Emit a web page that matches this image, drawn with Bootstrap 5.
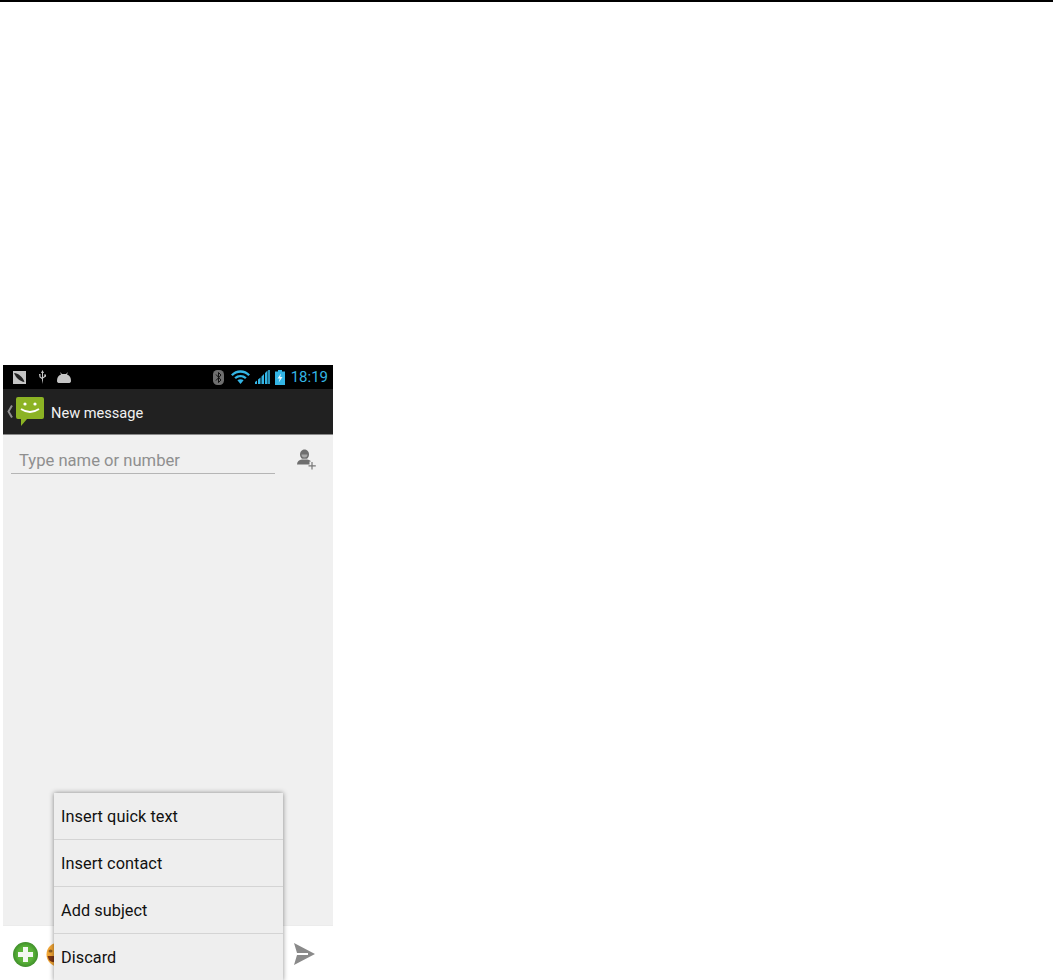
<!DOCTYPE html>
<html lang="en">
<head>
  <meta charset="UTF-8">
  <meta name="viewport" content="width=device-width, initial-scale=1.0">
  <title>New message</title>
  <link href="https://cdn.jsdelivr.net/npm/bootstrap@5.3.0/dist/css/bootstrap.min.css" rel="stylesheet">
  <style>
    html, body { height: 100%; overflow: hidden; background: #fff; }
    body { font-family: Roboto, "Liberation Sans", sans-serif; }

    .top-rule { height: 2px; background: #000; }

    .phone { width: 330px; height: 615px; margin: 363px 0 0 3px; position: relative; overflow: hidden; }

    .status-bar { height: 24px; background: #000; padding: 0 5px 0 10px; }
    .usb-icon { margin-left: 12px; }
    .droid-icon { margin-left: 10px; }
    .wifi-icon { margin-left: 7px; }
    .signal-icon { margin-left: 5px; }
    .battery-icon { margin-left: 5px; }
    .status-time { color: #33b5e5; font-size: 15px; line-height: 24px; margin-left: 6px; }

    .action-bar { height: 46px; background: #212121; border-bottom: 1px solid #8a8a8a; }
    .msg-logo { margin-left: 3px; }
    .action-title { color: #f2f2f2; font-size: 14.6px; margin-left: 7px; padding-top: 5px; }

    .compose-area { height: 490px; background: #f0f0f0; padding: 13px 17px 0 8px; }
    .name-field { width: 264px; height: 26px; border-bottom: 1px solid #b5b5b5; color: #8f8f8f; font-size: 16.6px; line-height: 26px; padding-left: 8px; }
    .add-contact { margin-top: 1px; }

    .send-row { height: 55px; background: #fff; padding: 2px 18px 0 10px; border-top: 1px solid #ececec; }
    .emoji-peek { margin-left: 8px; }

    .attach-menu { position: absolute; left: 51px; top: 428px; width: 229px; background: #eee; box-shadow: 0 0 5px rgba(0, 0, 0, .45); }
    .attach-item { height: 47px; padding: 0 7px; color: #111; font-size: 16.3px; letter-spacing: .05px; line-height: 48px; border-bottom: 1px solid #d4d4d4; }
  </style>
</head>
<body>
  <div class="top-rule"></div>

  <div class="phone">
    <!-- status bar -->
    <div class="status-bar d-flex align-items-center">
      <svg width="13" height="13" viewBox="0 0 13 13"><rect width="13" height="13" fill="#c4c4c4"/><path d="M1 2 C5 2 10 6 11.500 11 C7 10.500 3 7 1 2Z" fill="#222"/></svg>
      <svg class="usb-icon" width="9" height="14" viewBox="0 0 9 14"><path d="M4.500 0 L6 3 H5 V10 L4.500 14 L4 10 V3 H3Z M1 4 H2.500 V6.500 L4.500 8 V9.500 L1.500 7.200Z M6 4.500 H8 V6.500 L4.500 8.800 V7.500 L6.500 6Z" fill="#c8c8c8"/></svg>
      <svg class="droid-icon me-auto" width="14" height="11" viewBox="0 0 14 11"><path d="M3 0 L5 2 H9 L11 0 L10 2.600 C13 3.600 14 6 14 9 C14 10.500 13 11 11.500 11 H2.500 C1 11 0 10.500 0 9 C0 6 1 3.600 4 2.600Z" fill="#c4c4c4"/></svg>
      <svg width="11" height="15" viewBox="0 0 11 15"><rect width="11" height="15" rx="4.500" fill="#6e6e6e"/><path d="M3 4.500 L8 10 L5.500 12.500 V2.500 L8 5 L3 10.500" fill="none" stroke="#111" stroke-width="1"/></svg>
      <svg class="wifi-icon" width="19" height="14" viewBox="0 0 19 14"><path d="M0 4.500 C5 -1.200 14 -1.200 19 4.500 L17.300 6 C12.800 1.600 6.200 1.600 1.700 6Z M3.300 7.500 C6.700 4.200 12.300 4.200 15.700 7.500 L14 9 C11.700 6.800 7.300 6.800 5 9Z M6.400 10.200 C8.100 8.800 10.900 8.800 12.600 10.200 L9.500 14Z" fill="#33b5e5"/></svg>
      <svg class="signal-icon" width="15" height="14" viewBox="0 0 15 14"><path d="M0 14 V12 L2 10.500 V14Z M3 14 V9.500 L5.500 7.500 V14Z M6.500 14 V6.500 L9 4 V14Z M10 14 V3 L12.500 0.500 V14Z" fill="#33b5e5"/><path d="M13 14 V0 H15 V14Z" fill="#2a93ba"/></svg>
      <svg class="battery-icon" width="10" height="15" viewBox="0 0 10 15"><path d="M3 0 H7 V1.500 H10 V15 H0 V1.500 H3Z" fill="#33b5e5"/><path d="M6 3.500 L2.500 8.500 H4.700 L3.700 12.500 L7.500 7 H5.200Z" fill="#e8f7fd"/></svg>
      <span class="status-time">18:19</span>
    </div>

    <!-- action bar -->
    <div class="action-bar d-flex align-items-center ps-1">
      <svg width="6" height="13" viewBox="0 0 6 13"><path d="M5 0.500 L1.500 6.500 L5 12.500" fill="none" stroke="#8f8f8f" stroke-width="2"/></svg>
      <svg class="msg-logo" width="28" height="31" viewBox="0 0 28 31">
        <path d="M2 1 H26 Q28 1 28 3 V21 Q28 23 26 23 H11 L5 30 V23 H2 Q0 23 0 21 V3 Q0 1 2 1Z" fill="#8cb324"/>
        <circle cx="9" cy="8" r="1.600" fill="#fff"/><circle cx="19" cy="8" r="1.600" fill="#fff"/>
        <path d="M5 13 Q14 19 23 13" fill="none" stroke="#fff" stroke-width="1.800"/>
      </svg>
      <span class="action-title">New message</span>
    </div>

    <!-- recipient -->
    <div class="compose-area d-flex justify-content-between align-items-start">
      <div class="name-field">Type name or number</div>
      <svg class="add-contact" width="19" height="21" viewBox="0 0 19 21">
        <path d="M3 5.500 C3 2 5.500 0.500 7.500 0.500 C9.500 0.500 12 2 12 5.500 C12 7.500 11 9 10 9.800 H5 C4 9 3 7.500 3 5.500Z" fill="#6f6f6f"/>
        <path d="M4.500 5.500 H10.500 C10.500 7.500 9.500 8.500 7.500 8.500 C5.500 8.500 4.500 7.500 4.500 5.500Z" fill="#a8a8a8"/>
        <path d="M0 15.500 C0 12.500 2 11 5 10.500 H10 C12 10.800 13.500 11.500 14 12.500 H12.500 V15.500Z" fill="#6f6f6f"/>
        <path d="M15 13 V20.500 M11.500 16.800 H18.800" stroke="#777" stroke-width="1.200"/>
      </svg>
    </div>

    <!-- bottom row -->
    <div class="send-row d-flex align-items-center">
      <svg width="25" height="25" viewBox="0 0 25 25">
        <defs><radialGradient id="plusGreen"><stop offset="0.6" stop-color="#5cb53a"/><stop offset="1" stop-color="#3f8f2a"/></radialGradient></defs>
        <circle cx="12.500" cy="12.500" r="12.500" fill="url(#plusGreen)"/>
        <path d="M12.500 5 V20 M5 12.500 H20" stroke="#f4f8f2" stroke-width="5"/>
      </svg>
      <svg class="emoji-peek me-auto" width="20" height="25" viewBox="0 0 20 25"><circle cx="12.500" cy="12.500" r="12" fill="#f0a535"/><ellipse cx="4.500" cy="9" rx="2" ry="1.500" fill="#8a5a20"/><path d="M1.500 14 H14 V18 C11 21 6 21 3 18Z" fill="#7a3415"/></svg>
      <svg width="21" height="22" viewBox="0 0 21 22"><path d="M0 0 L21 11 L0 22 L3 12 H14 V10 H3Z" fill="#8a8a8a"/></svg>
    </div>

    <!-- popup menu -->
    <div class="attach-menu">
      <div class="attach-item">Insert quick text</div>
      <div class="attach-item">Insert contact</div>
      <div class="attach-item">Add subject</div>
      <div class="attach-item">Discard</div>
    </div>
  </div>

  <script src="https://cdn.jsdelivr.net/npm/bootstrap@5.3.0/dist/js/bootstrap.bundle.min.js"></script>
</body>
</html>
